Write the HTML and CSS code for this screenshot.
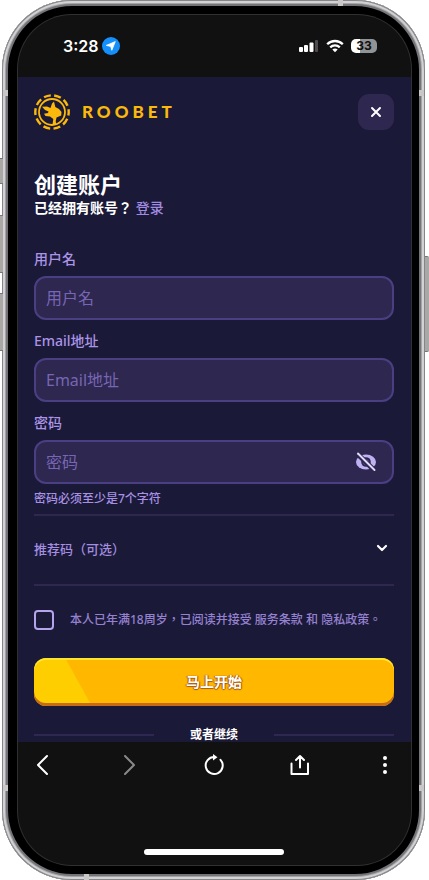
FILE: index.html
```html
<!DOCTYPE html>
<html lang="zh-Hant">
<head>
<meta charset="utf-8">
<meta name="viewport" content="width=device-width, initial-scale=1">
<title>Roobet</title>
<link rel="stylesheet" href="styles.css">
</head>
<body>
<div class="phone">
  <span class="key key-mute"></span>
  <span class="key key-up"></span>
  <span class="key key-down"></span>
  <span class="key key-power"></span>
  <span class="band band-left band-upper"></span>
  <span class="band band-right band-upper"></span>
  <span class="band band-left band-lower"></span>
  <span class="band band-right band-lower"></span>
  <span class="band band-top"></span>
  <span class="band band-bottom"></span>
  <div class="screen">
    <div class="status">
      <div class="clock">
        <span>3:28</span>
        <svg width="18" height="18" viewBox="0 0 18 18"><circle cx="9" cy="9" r="9" fill="#1590fb"/><path d="M13.3 4.6 9.8 13.3 8.7 9.4 4.3 8.4Z" fill="#fff" stroke="#fff" stroke-width=".8" stroke-linejoin="round"/></svg>
      </div>
      <div class="indicators">
        <svg width="20" height="14" viewBox="0 0 20 14"><g fill="#fff"><rect x="0" y="8" width="4" height="5" rx="1"/><rect x="5" y="6" width="4" height="7" rx="1"/><rect x="10.500" y="3.500" width="4" height="9.500" rx="1"/></g><rect x="16" y="1" width="3" height="12" rx="1" fill="#514b50"/></svg>
        <svg width="18" height="14" viewBox="0 0 18 14" fill="none" stroke="#fff" stroke-width="2.300"><path d="M1.200 5.200C5.500.9 12.500.9 16.800 5.200"/><path d="M4.200 8.400C6.900 5.800 11.100 5.800 13.800 8.400"/><path d="M9 13.300 6.300 10.600C7.800 9.100 10.200 9.100 11.700 10.600Z" fill="#fff" stroke="none"/></svg>
        <span class="battery">33</span>
      </div>
    </div>

    <main class="page">
      <header class="header">
        <a class="brand" href="#">
          <svg width="36" height="36" viewBox="0 0 36 36"><circle cx="18" cy="18" r="16.700" fill="none" stroke="#fbb90b" stroke-width="2.400" stroke-dasharray="7 3.490" stroke-dashoffset="3.500"/><circle cx="18" cy="18" r="13" fill="none" stroke="#fbb90b" stroke-width="1.800"/><path d="M8 12.800 13 12.600 16.500 14 18 9.500 20 7.500 21.300 13 25 15 27.500 18 27.200 21.500 22.500 23.500 21.700 27.500 22.500 30.500 18.500 30.500 19.300 25 16 22.500 11.500 22 10 19.800 14 19 14.500 17.500 11 16Z" fill="#fbb90b"/></svg>
          <span>ROOBET</span>
        </a>
        <button class="close" type="button" aria-label="关闭"><svg width="12" height="12" viewBox="0 0 12 12"><path d="M2 2 10 10M10 2 2 10" stroke="#fff" stroke-width="2" stroke-linecap="round"/></svg></button>
      </header>

      <h1>创建账户</h1>
      <p class="have">已经拥有账号？ <a href="#">登录</a></p>

      <form>
        <div class="field">
          <label for="user">用户名</label>
          <input id="user" type="text" placeholder="用户名">
        </div>
        <div class="field">
          <label for="email">Email地址</label>
          <input id="email" type="email" placeholder="Email地址">
        </div>
        <div class="field">
          <label for="pass">密码</label>
          <div class="secret">
            <input id="pass" type="password" placeholder="密码">
            <button class="reveal" type="button" aria-label="显示密码"><svg width="22" height="20" viewBox="0 0 22 20"><ellipse cx="11" cy="10" rx="10" ry="7.500" fill="#c0b1f1"/><circle cx="11" cy="10" r="4.800" fill="#2e2750"/><circle cx="11" cy="10" r="2.600" fill="#c0b1f1"/><path d="M2.500 2 19.500 18.500" stroke="#2e2750" stroke-width="5"/><path d="M3 1.500 19.500 18" stroke="#e2dafb" stroke-width="2" stroke-linecap="round"/></svg></button>
          </div>
        </div>
        <p class="hint">密码必须至少是7个字符</p>
        <button class="referral" type="button"><span>推荐码（可选）</span><svg width="12" height="8" viewBox="0 0 12 8"><path d="M2 2 6 6 10 2" fill="none" stroke="#fff" stroke-width="2.200" stroke-linecap="round" stroke-linejoin="round"/></svg></button>
        <div class="terms">
          <input id="terms" type="checkbox">
          <label for="terms">本人已年满18周岁，已阅读并接受 <a href="#">服务条款</a> 和 <a href="#">隐私政策</a>。</label>
        </div>
        <button class="start" type="submit">马上开始</button>
      </form>
      <div class="or"><span>或者继续</span></div>
    </main>

    <div class="browser">
      <nav class="tools">
        <button type="button" aria-label="后退"><svg viewBox="0 0 24 24"><path d="M16 3 7 12 16 21"/></svg></button>
        <button class="dim" type="button" aria-label="前进"><svg viewBox="0 0 24 24"><path d="M8 3 17 12 8 21"/></svg></button>
        <button type="button" aria-label="刷新"><svg viewBox="0 0 24 24"><path d="M12.500 4A8.500 8.500 0 1 0 18.500 6.800"/><path d="M11 1 15.500 4.200 11 7.500Z" fill="#fff" stroke="none"/></svg></button>
        <button type="button" aria-label="分享"><svg viewBox="0 0 24 24"><path d="M3.500 10.500V21H20V10.500M12 14.500V3M8 7 12 3 16 7"/></svg></button>
        <button type="button" aria-label="更多"><svg viewBox="0 0 24 24"><g fill="#fff" stroke="none"><circle cx="12" cy="5" r="2"/><circle cx="12" cy="12" r="2"/><circle cx="12" cy="19" r="2"/></g></svg></button>
      </nav>
      <div class="home"></div>
    </div>
  </div>
</div>
</body>
</html>
```
FILE: styles.css
```css
* { box-sizing: border-box; }

body {
  margin: 0;
  background: #fff;
  font-family: "Noto Sans", "Noto Sans CJK TC", sans-serif;
}

button, input { font: inherit; }
button { padding: 0; border: 0; background: none; cursor: pointer; }
a { color: inherit; text-decoration: none; }
h1, p { margin: 0; }
svg { display: block; flex: none; }

/* Handset */
.phone {
  position: relative;
  display: flex;
  min-height: 100vh;
  margin: 0 4px 0 2px;
  padding: 15px 14px 15px 16px;
  border-radius: 70px;
  background: #000;
  box-shadow:
    inset 0 0 0 1px #858589,
    inset 0 0 0 3px #d2d2d4,
    inset 0 0 0 4px #a4a4a7,
    inset 0 0 0 6px #737378;
}

.key { position: absolute; left: -2px; width: 3px; background: #aaa8a7; border: solid #777; border-width: 1px 0; }
.key-mute { top: 158px; height: 26px; }
.key-up { top: 215px; height: 58px; }
.key-down { top: 293px; height: 58px; }
.key-power { top: 256px; left: auto; right: -4px; width: 4px; height: 96px; border-radius: 0 2px 2px 0; }

.band { position: absolute; width: 5px; height: 6px; background: #c9c7c8; }
.band-left { left: 1px; }
.band-right { right: 1px; }
.band-upper { top: 90px; }
.band-lower { bottom: 89px; }
.band-top { top: 0; right: 82px; }
.band-bottom { bottom: 0; left: 82px; }

.screen {
  flex: 1;
  display: flex;
  flex-direction: column;
  min-width: 0;
  border-radius: 54px;
  overflow: hidden;
  background: #111;
  box-shadow: 0 0 0 1px #303030;
}

/* Status bar */
.status {
  display: flex;
  justify-content: space-between;
  align-items: center;
  height: 62px;
  padding: 0 34px 0 45px;
  color: #fff;
}
.clock { display: flex; align-items: center; gap: 3px; font: 600 16px/20px Inter, sans-serif; }
.indicators { display: flex; align-items: center; gap: 7px; }
.battery {
  width: 26px;
  border-radius: 5px;
  background: linear-gradient(90deg, #fff 34%, #929394 34%);
  color: #111;
  font: 700 12px/14px Inter, sans-serif;
  text-align: center;
}

/* Sign-up page */
.page {
  flex: 1;
  padding: 17px 17px 0 16px;
  background: #1a1937;
  color: #fff;
}
.header { display: flex; justify-content: space-between; align-items: center; }
.brand {
  display: flex;
  align-items: center;
  gap: 12px;
  color: #fbb90b;
  font: 900 17px/20px Lato, sans-serif;
  letter-spacing: 4px;
}
.close {
  display: grid;
  place-items: center;
  width: 36px;
  height: 36px;
  border-radius: 11px;
  background: #2e2750;
}

h1 { margin-top: 41px; font-size: 22px; line-height: 26px; font-weight: 700; }
.have { margin-top: 1px; font-size: 14px; line-height: 20px; font-weight: 700; }
.have a { color: #a18be0; font-weight: 500; }

form { margin-top: 32px; }
.field { margin-bottom: 12px; }
.field label {
  display: block;
  margin-bottom: 8px;
  color: #ab94e6;
  font-size: 14px;
  line-height: 18px;
  font-weight: 500;
}
.field input {
  display: block;
  width: 100%;
  height: 44px;
  padding: 0 10px;
  border: 2px solid #4a3f83;
  border-radius: 12px;
  outline: 0;
  background: #2e2750;
  color: #fff;
  font-size: 16px;
}
.field input::placeholder { color: #7766b3; opacity: 1; }
.secret { position: relative; }
.reveal { position: absolute; top: 12px; right: 17px; }

.hint { margin: -5px 0 7px; color: #a891e4; font-size: 12px; line-height: 16px; font-weight: 500; }
.referral {
  display: flex;
  justify-content: space-between;
  align-items: center;
  width: 100%;
  height: 72px;
  padding: 0 6px 4px 0;
  border: solid #2e2750;
  border-width: 2px 0;
  color: #a48ee0;
  font-size: 13px;
  font-weight: 500;
}
.terms { display: flex; align-items: center; gap: 16px; margin: 24px 0 28px; }
.terms input {
  appearance: none;
  flex: none;
  width: 20px;
  height: 20px;
  margin: 0;
  border: 2px solid #b5a3ec;
  border-radius: 4px;
}
.terms input:checked { background: #b5a3ec; }
.terms label { color: #9581d0; font-size: 12px; line-height: 20px; font-weight: 500; }

.start {
  display: block;
  width: 100%;
  height: 48px;
  padding-bottom: 3px;
  border-radius: 12px;
  background: linear-gradient(61deg, #ffce00 50px, #ffb700 51px);
  box-shadow: inset 0 2px 0 #ffe52b, inset 0 -3px 0 #c86b18;
  color: #fff;
  font-size: 14px;
  font-weight: 700;
  text-shadow: 0 1px 1px #a95713, 1px 0 1px #a95713, -1px 0 1px #a95713;
}

.or {
  display: flex;
  align-items: center;
  justify-content: space-between;
  margin-top: 22px;
  font-size: 12px;
  line-height: 14px;
  font-weight: 700;
}
.or::before, .or::after { content: ""; width: 33.333%; height: 2px; background: #2e2750; }

/* Browser toolbar */
.browser {
  display: flex;
  flex-direction: column;
  justify-content: space-between;
  align-items: center;
  height: 123px;
  padding: 11px 14px 10px 13px;
}
.tools { display: flex; justify-content: space-between; width: 100%; }
.tools svg { width: 24px; height: 24px; fill: none; stroke: #fff; stroke-width: 2; stroke-linecap: round; stroke-linejoin: round; }
.tools .dim { opacity: .5; }
.home { width: 140px; height: 6px; border-radius: 3px; background: #fff; }
```
